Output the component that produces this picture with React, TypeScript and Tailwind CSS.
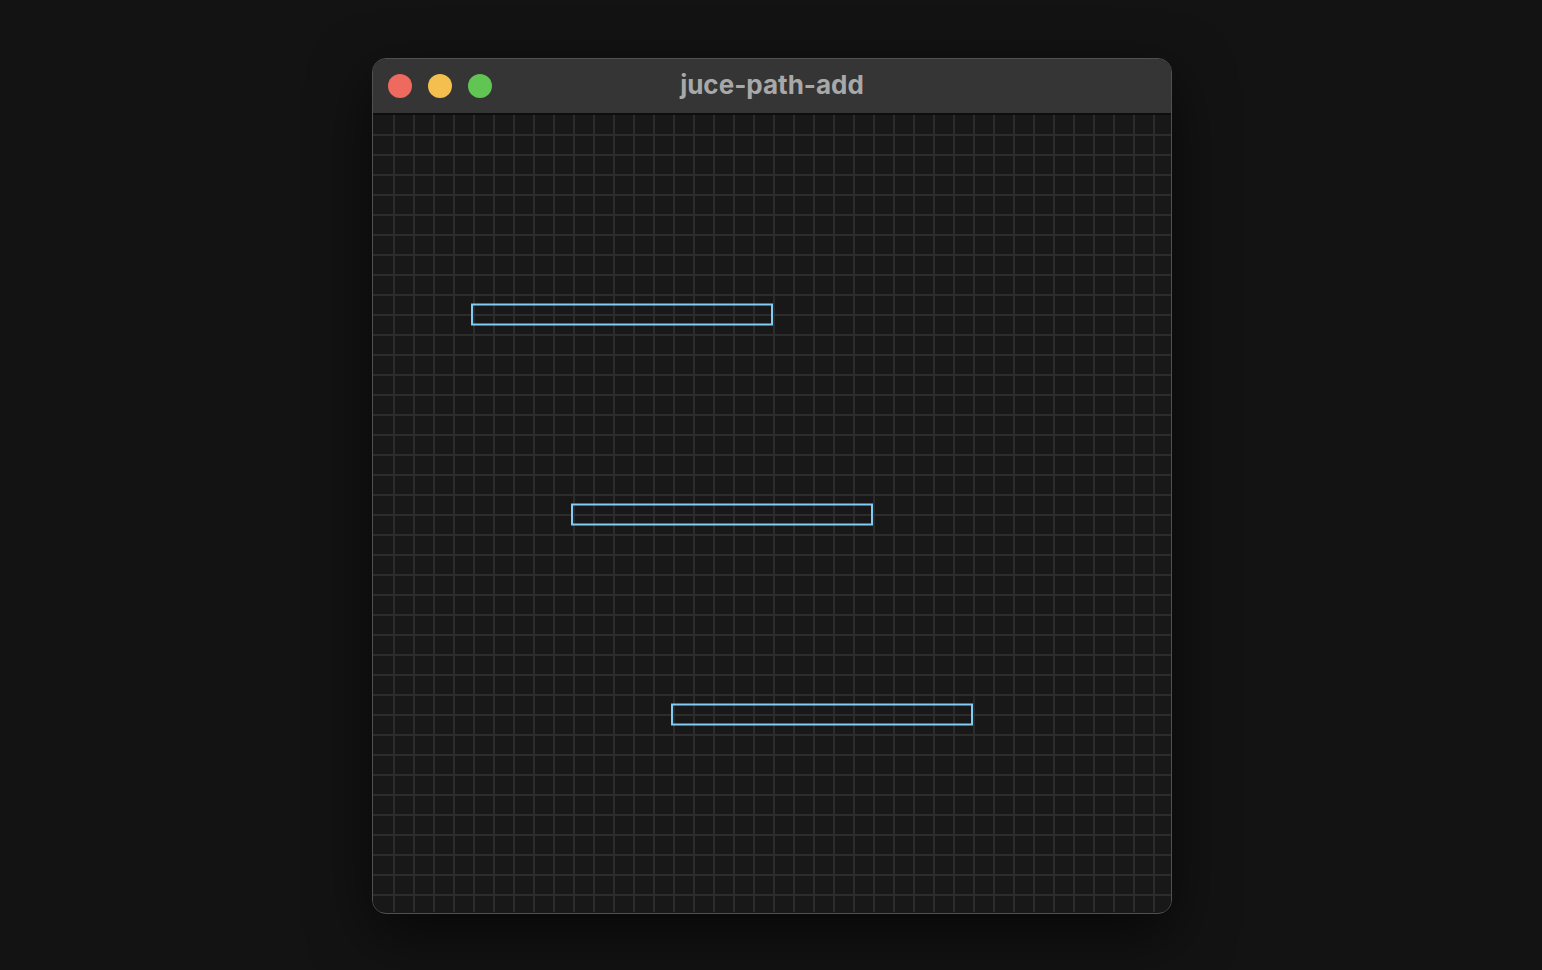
const GRID = Array.from({ length: 40 }, (_, i) => i);

const RECTS = [
  { x: 99, y: 189.5 },
  { x: 199, y: 389.5 },
  { x: 299, y: 589.5 },
];

function TrafficLights() {
  return (
    <div className="flex items-center gap-4">
      <span className="block h-6 w-6 rounded-full bg-[#ee6a5f]" />
      <span className="block h-6 w-6 rounded-full bg-[#f5bf4f]" />
      <span className="block h-6 w-6 rounded-full bg-[#61c554]" />
    </div>
  );
}

function Canvas() {
  return (
    <svg width="798" height="797" className="block">
      <rect x="0" y="0" width="798" height="797" fill="#181818" />
      {GRID.map((i) => (
        <line
          key={"v" + i}
          x1={20 * i + 21}
          y1="0"
          x2={20 * i + 21}
          y2="797"
          stroke="#2c2c2c"
          strokeWidth="2"
        />
      ))}
      {GRID.map((i) => (
        <line
          key={"h" + i}
          x1="0"
          y1={20 * i + 20}
          x2="798"
          y2={20 * i + 20}
          stroke="#2c2c2c"
          strokeWidth="2"
        />
      ))}
      {RECTS.map((r, i) => (
        <rect
          key={i}
          x={r.x}
          y={r.y}
          width="300"
          height="20"
          fill="none"
          stroke="#82cdf5"
          strokeWidth="2"
        />
      ))}
    </svg>
  );
}

export default function App() {
  return (
    <div className="flex h-[970px] w-full justify-center bg-[#131313] pt-[58px]">
      <div className="ml-[2px] flex h-[856px] w-[800px] flex-col overflow-hidden rounded-[14px] border border-[#505050] bg-[#181818] shadow-[0_20px_60px_rgba(0,0,0,0.6)]">
        <div className="relative flex h-[56px] shrink-0 items-center border-b-2 border-[#0e0e0e] bg-[#353535] px-[15px]">
          <TrafficLights />
          <div className="absolute inset-0 flex items-center justify-center pb-[3px]">
            <span className="font-['Inter',sans-serif] text-[26px] font-bold text-[#a8a8a8]">
              juce-path-add
            </span>
          </div>
        </div>
        <Canvas />
      </div>
    </div>
  );
}
